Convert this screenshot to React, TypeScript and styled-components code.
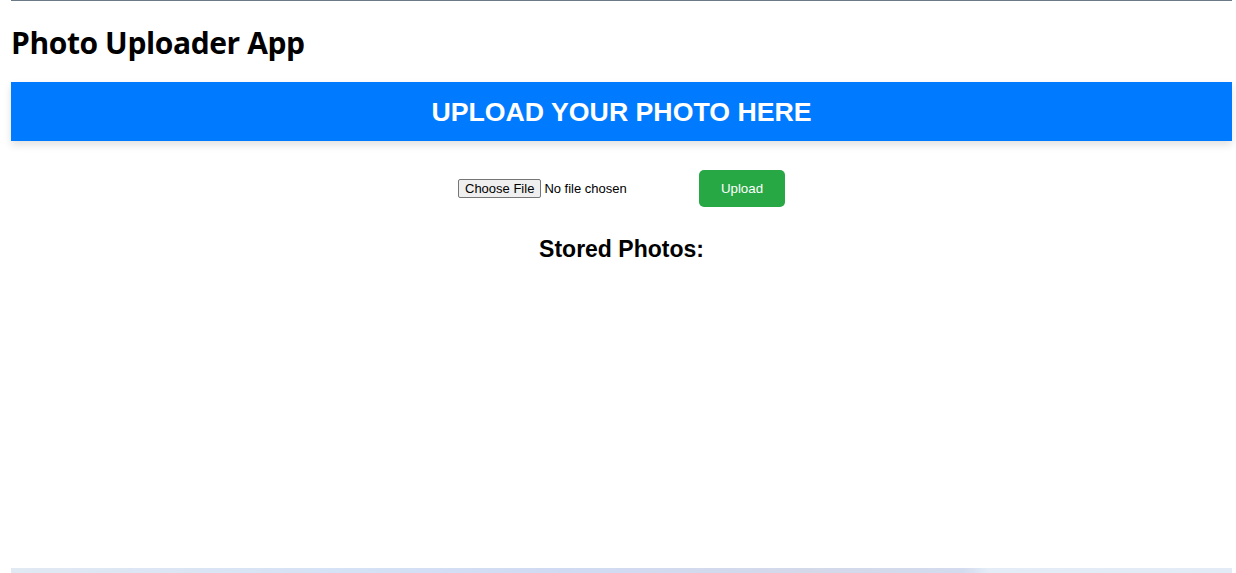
import React from "react";
import styled, { createGlobalStyle } from "styled-components";

const GlobalStyle = createGlobalStyle`
  html, body { margin: 0; padding: 0; background: #ffffff; }
  body { font-family: "Liberation Sans", Arial, sans-serif; }
`;

const Page = styled.div`
  min-height: 573px;
  height: 573px;
  box-sizing: border-box;
  padding: 0 4px 0 11px;
  display: flex;
  flex-direction: column;
  overflow: hidden;
`;

const TopRule = styled.div`
  height: 1px;
  background: #6b7a86;
  flex-shrink: 0;
`;

const Title = styled.h1`
  margin: 23px 0 0 0;
  height: 38px;
  font-family: "Open Sans", "Noto Sans", sans-serif;
  font-weight: 700;
  font-size: 30px;
  line-height: 38px;
  letter-spacing: -0.4px;
  color: #000;
`;

const Banner = styled.div`
  margin-top: 20px;
  height: 59px;
  box-sizing: border-box;
  padding-top: 2px;
  background: #007bff;
  box-shadow: 0 4px 8px rgba(0, 0, 0, 0.12);
  display: flex;
  align-items: center;
  justify-content: center;
  color: #ffffff;
  font-family: "Liberation Sans", Arial, sans-serif;
  font-weight: 700;
  font-size: 26.7px;
`;

const UploadRow = styled.div`
  margin-top: 29px;
  display: flex;
  align-items: center;
  justify-content: center;
`;

const FileInput = styled.input`
  width: 231px;
  margin: 0 10px 0 0;
  font-family: "Liberation Sans", Arial, sans-serif;
  font-size: 13px;
  color: #000;

  &::file-selector-button {
    font-family: "Liberation Sans", Arial, sans-serif;
    font-size: 13px;
    height: 19px;
    padding: 0 6px;
    margin-right: 3px;
    border: 1px solid #767676;
    border-radius: 2px;
    background: #efefef;
    color: #000;
  }
`;

const UploadButton = styled.button`
  width: 86px;
  height: 37px;
  padding: 0;
  border: none;
  border-radius: 5px;
  background: #28a745;
  color: #ffffff;
  font-family: "Liberation Sans", Arial, sans-serif;
  font-size: 13.33px;
  cursor: pointer;
`;

const SectionTitle = styled.h2`
  margin: 28px 0 0 0;
  text-align: center;
  font-family: "Liberation Sans", Arial, sans-serif;
  font-weight: 700;
  font-size: 23px;
  line-height: 28px;
  color: #000;
`;

const BottomStrip = styled.div`
  margin-top: auto;
  height: 5px;
  flex-shrink: 0;
  background: linear-gradient(
    90deg,
    #e1e9f3 0%,
    #d6e2f5 25%,
    #d0dbf3 45%,
    #d4d9ea 65%,
    #d3dbee 78%,
    #e3ecf7 80%,
    #e2ebf6 100%
  );
`;

export default function App() {
  return (
    <>
      <GlobalStyle />
      <Page>
        <TopRule />
        <Title>Photo Uploader App</Title>
        <Banner>UPLOAD YOUR PHOTO HERE</Banner>
        <UploadRow>
          <FileInput type="file" />
          <UploadButton type="button">Upload</UploadButton>
        </UploadRow>
        <SectionTitle>Stored Photos:</SectionTitle>
        <BottomStrip />
      </Page>
    </>
  );
}
